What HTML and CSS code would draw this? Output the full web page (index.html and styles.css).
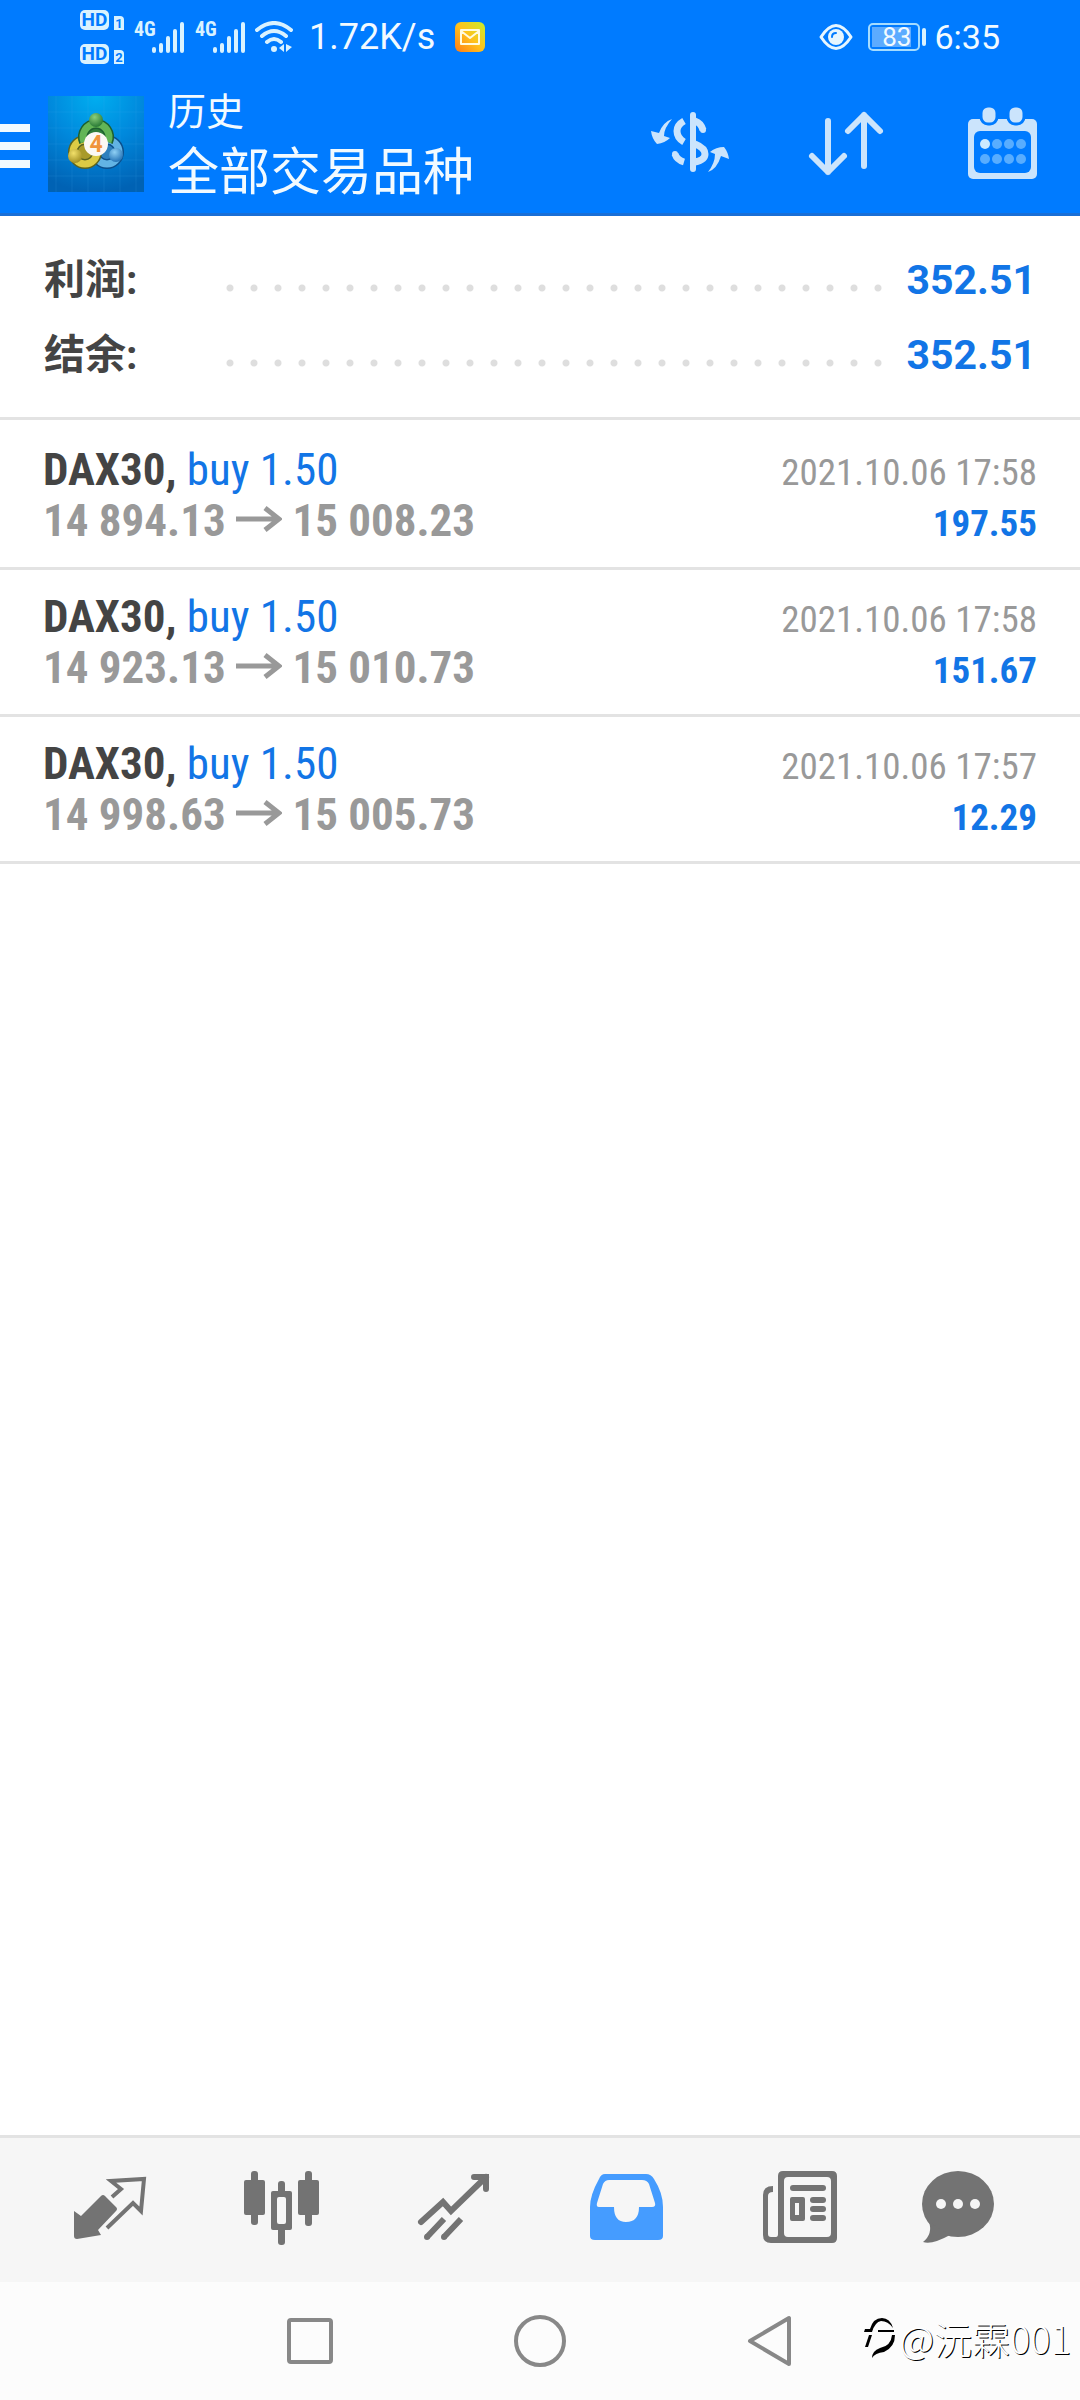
FILE: index.html
```html
<!DOCTYPE html>
<html lang="zh-CN">
<head>
<meta charset="utf-8">
<meta name="viewport" content="width=device-width, initial-scale=1">
<title>历史</title>
<link rel="stylesheet" href="styles.css">
</head>
<body>
<header class="top">
  <div class="status">
    <div class="hd">
      <div class="hd-row"><span class="hd-badge">HD</span><span class="hd-sim">1</span></div>
      <div class="hd-row"><span class="hd-badge">HD</span><span class="hd-sim">2</span></div>
    </div>
    <div class="signal">
      <span class="net">4G</span>
      <svg width="33" height="32" viewBox="0 0 33 32" aria-hidden="true"><path d="M2 28v2M9 24v6M16 17v13M23 10v20M30 3v27"/></svg>
    </div>
    <div class="signal">
      <span class="net">4G</span>
      <svg width="33" height="32" viewBox="0 0 33 32" aria-hidden="true"><path d="M2 28v2M9 24v6M16 17v13M23 10v20M30 3v27"/></svg>
    </div>
    <svg class="wifi" width="38" height="32" viewBox="0 0 38 32" aria-hidden="true">
      <path class="wifi-arc" d="M2 9Q19-5 36 9M7 15Q19 5 31 15M12 21Q19 15 26 21"/>
      <circle cx="19" cy="28" r="3"/><path d="M29 23v8l-5-4zM31 23v8l6-5z"/>
    </svg>
    <span class="speed">1.72K/s</span>
    <svg width="30" height="30" viewBox="0 0 30 30" aria-hidden="true">
      <defs><linearGradient id="mail" x1="0" y1="1" x2="1" y2="0"><stop offset="0" stop-color="#ff7a14"/><stop offset=".5" stop-color="#ffc21c"/><stop offset="1" stop-color="#c9ee2e"/></linearGradient></defs>
      <rect width="30" height="30" rx="6" fill="url(#mail)"/>
      <path d="M6 8h18v14H6zM6 9l9 7 9-7" fill="none" stroke="#fffbe0" stroke-width="2" stroke-linejoin="round"/>
    </svg>
    <div class="status-right">
      <svg width="34" height="28" viewBox="0 0 34 28" aria-hidden="true">
        <path d="M2 14Q17-9 32 14Q17 37 2 14z" fill="none" stroke="#e6f6ff" stroke-width="3" stroke-linejoin="round"/>
        <circle cx="17" cy="14" r="8" fill="#e6f6ff"/><path d="M13 14q0-4 4-4" fill="none" stroke="#007bff" stroke-width="2" stroke-linecap="round"/>
      </svg>
      <span class="battery"><span class="battery-level">83</span></span>
      <time class="clock">6:35</time>
    </div>
  </div>
  <div class="toolbar">
    <button class="menu" type="button" aria-label="菜单"><i></i><i></i><i></i></button>
    <svg class="logo" width="96" height="96" viewBox="0 0 96 96" aria-hidden="true">
      <defs>
        <radialGradient id="bg" cx=".5" cy="0" r="1"><stop offset="0" stop-color="#00aef0"/><stop offset=".5" stop-color="#0088dc"/><stop offset="1" stop-color="#0062b4"/></radialGradient>
        <radialGradient id="green" cx=".4" cy=".3" r=".8"><stop offset="0" stop-color="#8ccf7a"/><stop offset="1" stop-color="#1b6e2c"/></radialGradient>
        <radialGradient id="gold" cx=".4" cy=".3" r=".8"><stop offset="0" stop-color="#f2e06a"/><stop offset="1" stop-color="#97851a"/></radialGradient>
        <radialGradient id="blue" cx=".4" cy=".3" r=".8"><stop offset="0" stop-color="#8fd0f4"/><stop offset="1" stop-color="#1767ae"/></radialGradient>
      </defs>
      <rect width="96" height="96" fill="url(#bg)"/>
      <path d="M8 0v96M24 0v96M40 0v96M56 0v96M72 0v96M88 0v96M0 16h96M0 32h96M0 48h96M0 64h96M0 80h96" stroke="#4db8ef" stroke-opacity=".15"/>
      <circle cx="59" cy="56" r="12" fill="#2d7fbd" stroke="#0b4f8c" stroke-width="10"/>
      <circle cx="59" cy="56" r="12" fill="none" stroke="#62b3e4" stroke-width="7"/>
      <circle cx="37" cy="56" r="12" fill="#a89a2a" stroke="#5c6420" stroke-width="10"/>
      <circle cx="37" cy="56" r="12" fill="none" stroke="#dccb45" stroke-width="7"/>
      <path d="M36 46A13 13 0 1 1 60 46" fill="#2f7d3a" stroke="#1d6030" stroke-width="10"/>
      <path d="M36 46A13 13 0 1 1 60 46" fill="none" stroke="#62b556" stroke-width="7"/>
      <circle cx="48" cy="24" r="7" fill="url(#green)"/>
      <circle cx="27" cy="60" r="7" fill="url(#gold)"/>
      <circle cx="68" cy="59" r="7" fill="url(#blue)"/>
      <circle cx="48" cy="48" r="12" fill="#fbf8f4"/>
      <text x="48" y="56" text-anchor="middle" class="logo-num">4</text>
    </svg>
    <div class="titles">
      <h1 class="title">历史</h1>
      <p class="subtitle">全部交易品种</p>
    </div>
    <div class="actions">
      <button type="button" aria-label="货币">
        <svg width="78" height="72" viewBox="651 108 78 72">
          <g fill="none" stroke="#cbe4fc" stroke-width="7">
            <path stroke-width="6" stroke-linecap="round" d="M693 115v54"/>
            <path d="M684 121Q677 125 677 131Q677 138 684 142M695 144Q705 148 705 154Q705 160 695 162"/>
            <path d="M695 121Q701 123 703 130" /><path d="M675 154Q677 160 684 162"/>
          </g>
          <g fill="#cbe4fc"><circle cx="703" cy="130" r="3"/><circle cx="675" cy="154" r="3"/>
          <path d="M651 131l8 2Q663 122 672 119Q664 128 664 136L670 138Q665 143 657 144Q652 139 651 131z"/>
          <path d="M729 159l-8-3Q717 169 708 172Q715 163 715 154L710 152Q716 147 724 147Q728 152 729 159z"/></g>
        </svg>
      </button>
      <button type="button" aria-label="排序">
        <svg width="78" height="72" viewBox="807 108 78 72" fill="none" stroke="#cbe4fc" stroke-width="6" stroke-linecap="round" stroke-linejoin="round">
          <path d="M828 121v51M812 156l16 16 16-16M864 166v-51M848 131l16-16 16 16"/>
        </svg>
      </button>
      <button type="button" aria-label="日历">
        <svg width="78" height="74" viewBox="963 106 78 74">
          <rect x="968" y="118" width="69" height="60" rx="5" fill="#cbe4fc"/>
          <rect x="974" y="130" width="57" height="42" rx="6" fill="#007bff"/>
          <g fill="#cbe4fc" stroke="#007bff" stroke-width="3"><rect x="981" y="105" width="16" height="18" rx="7"/><rect x="1008" y="105" width="16" height="18" rx="7"/></g>
          <circle cx="985" cy="143" r="5" fill="#cbe9ff"/>
          <g fill="#58adff"><circle cx="997" cy="143" r="5"/><circle cx="1009" cy="143" r="5"/><circle cx="1021" cy="143" r="5"/><circle cx="985" cy="158" r="5"/><circle cx="997" cy="158" r="5"/><circle cx="1009" cy="158" r="5"/><circle cx="1021" cy="158" r="5"/></g>
        </svg>
      </button>
    </div>
  </div>
</header>

<main class="content">
  <dl class="summary">
    <div class="sum-row"><dt>利润:</dt><dd>352.51</dd></div>
    <div class="sum-row"><dt>结余:</dt><dd>352.51</dd></div>
  </dl>
  <ul class="deals">
    <li class="deal">
      <span class="symbol"><b>DAX30,</b> buy 1.50</span>
      <time class="when">2021.10.06 17:58</time>
      <span class="prices">14 894.13 <svg class="to" width="46" height="30" viewBox="0 0 46 30" role="img" aria-label="至"><path d="M0 13h43M29 2l14 11-14 11"/></svg> 15 008.23</span>
      <b class="profit">197.55</b>
    </li>
    <li class="deal">
      <span class="symbol"><b>DAX30,</b> buy 1.50</span>
      <time class="when">2021.10.06 17:58</time>
      <span class="prices">14 923.13 <svg class="to" width="46" height="30" viewBox="0 0 46 30" role="img" aria-label="至"><path d="M0 13h43M29 2l14 11-14 11"/></svg> 15 010.73</span>
      <b class="profit">151.67</b>
    </li>
    <li class="deal">
      <span class="symbol"><b>DAX30,</b> buy 1.50</span>
      <time class="when">2021.10.06 17:57</time>
      <span class="prices">14 998.63 <svg class="to" width="46" height="30" viewBox="0 0 46 30" role="img" aria-label="至"><path d="M0 13h43M29 2l14 11-14 11"/></svg> 15 005.73</span>
      <b class="profit">12.29</b>
    </li>
  </ul>
</main>

<nav class="tabs">
  <a href="#quotes" aria-label="行情">
    <svg width="80" height="80" viewBox="70 2170 80 80">
      <path d="M74 2211l7 5 20-20q2-2 4 0l11 11q2 2 0 4l-18 19 3 5-24 4q-3 0-3-3z"/>
      <path class="line" stroke-width="4" d="M112 2197l9-8-10-8 33-2-3 32-8-8-26 25"/>
    </svg>
  </a>
  <a href="#chart" aria-label="图表">
    <svg width="80" height="80" viewBox="242 2170 80 80">
      <rect x="244" y="2180" width="21" height="35" rx="2"/><rect x="298" y="2180" width="21" height="35" rx="2"/>
      <rect x="251" y="2171" width="7" height="54" rx="3"/><rect x="305" y="2171" width="7" height="55" rx="3"/>
      <rect x="278" y="2181" width="7" height="64" rx="3"/><rect x="271" y="2191" width="21" height="39" rx="2"/>
      <rect x="277" y="2197" width="9" height="27" rx="2" fill="#f6f6f6"/>
    </svg>
  </a>
  <a href="#trade" aria-label="交易">
    <svg width="80" height="80" viewBox="414 2170 80 80">
      <g class="line" stroke-width="6"><path stroke-linecap="round" d="M421 2222l22-20 8 9 35-34"/><path stroke-linecap="round" d="M474 2177h12v12"/>
      <path d="M444 2219l-17 18M461 2219l-17 18"/></g><circle cx="427" cy="2237" r="3"/><circle cx="444" cy="2237" r="3"/><path d="M480 2174h9v9z"/>
    </svg>
  </a>
  <a class="active" href="#history" aria-label="历史" aria-current="page">
    <svg width="80" height="80" viewBox="586 2170 80 80">
      <path fill-rule="evenodd" d="M605 2174h41q5 0 8 5q9 14 9 28v29q0 4-5 4h-63q-5 0-5-4v-29q0-12 9-28q2-5 6-5zM609 2180q-4 0-6 4l-6 19q-1 4 2 4h15q0 15 12 15q13 0 13-15h13q4 0 3-4l-6-19q-2-4-7-4z"/>
    </svg>
  </a>
  <a href="#news" aria-label="新闻">
    <svg width="80" height="80" viewBox="758 2170 80 80">
      <path fill-rule="evenodd" d="M783 2171h49q5 0 5 5v62q0 5-5 5h-61q-8 0-8-8v-40q0-9 10-9v6q-5 0-5 4v38q0 3 3 3h5q2 0 2-3v-58q0-5 5-5zM788 2177q-4 0-4 4v52q0 4 4 4h39q4 0 4-4v-52q0-4-4-4z"/>
      <rect x="790" y="2185" width="36" height="6" rx="3"/><path fill-rule="evenodd" d="M792 2197h11q2 0 2 2v20q0 2-2 2h-11q-2 0-2-2v-20q0-2 2-2zM795 2203v12h4v-12z"/>
      <rect x="810" y="2197" width="16" height="6" rx="3"/><rect x="810" y="2206" width="16" height="6" rx="3"/><rect x="810" y="2215" width="16" height="6" rx="3"/>
    </svg>
  </a>
  <a href="#messages" aria-label="消息">
    <svg width="104" height="80" viewBox="918 2170 104 80">
      <ellipse cx="958" cy="2204" rx="36" ry="33"/><path d="M929 2222Q933 2234 923 2242Q932 2245 950 2235z"/>
      <g fill="#f6f6f6"><circle cx="941" cy="2204" r="5"/><circle cx="958" cy="2204" r="5"/><circle cx="975" cy="2204" r="5"/></g>
    </svg>
  </a>
</nav>

<footer class="system">
  <button type="button" aria-label="最近"><svg width="54" height="54" viewBox="0 0 54 54"><rect x="6" y="6" width="42" height="42" rx="2"/></svg></button>
  <button type="button" aria-label="主页"><svg width="54" height="54" viewBox="0 0 54 54"><circle cx="27" cy="27" r="24"/></svg></button>
  <button type="button" aria-label="返回"><svg width="54" height="54" viewBox="0 0 54 54"><path d="M46 4v46L7 27z"/></svg></button>
  <div class="mark">
    <svg width="34" height="42" viewBox="0 0 34 42" aria-hidden="true"><path d="M1 15l1-3h5Q10 1 19 1Q27 1 30 11Q25 4 18 4Q12 5 9 15H2zM15 13h16v2H15zM6 18h3L5 30H2zM29 18h3Q32 30 21 35Q12 36 9 41Q9 34 17 31Q28 29 29 18z"/></svg>
    <span>@沅霖001</span>
  </div>
</footer>
</body>
</html>
```
FILE: styles.css
```css
* { box-sizing: border-box; margin: 0; padding: 0; }

body {
  min-height: 100vh;
  display: flex;
  flex-direction: column;
  background: #fff;
  color: #444;
  font-family: Roboto, "Noto Sans CJK SC", sans-serif;
}

button { border: 0; background: none; cursor: pointer; }
svg { display: block; }

/* Header */
.top { background: #007bff; color: #f2faff; border-bottom: 3px solid #1a6fd6; }

.status { display: flex; align-items: center; height: 74px; padding: 0 80px; }
.hd { display: flex; flex-direction: column; gap: 14px; }
.hd-row { display: flex; align-items: flex-end; gap: 5px; }
.hd-badge, .hd-sim { background: #d9f2ff; color: #007bff; font-weight: 700; text-align: center; }
.hd-badge { width: 29px; height: 20px; border-radius: 5px; font-size: 19px; line-height: 20px; }
.hd-sim { width: 10px; height: 14px; border-radius: 0 4px 0 0; font-size: 13px; line-height: 15px; }
.signal { display: flex; align-items: flex-start; margin-left: 10px; }
.signal svg { fill: none; stroke: #d9f2ff; stroke-width: 4; stroke-linecap: round; }
.net { width: 18px; font: 700 20px/16px "Roboto Condensed", Roboto, sans-serif; color: #d9f2ff; }
.wifi { margin-left: 9px; fill: #d9f2ff; }
.wifi-arc { fill: none; stroke: #d9f2ff; stroke-width: 4; stroke-linecap: round; }
.speed { margin: 0 20px 0 16px; font-size: 36px; line-height: 40px; }
.status-right { display: flex; align-items: center; margin-left: auto; }
.battery {
  position: relative;
  width: 52px; height: 28px;
  margin: 0 14px 0 15px;
  padding: 2px 7px 2px 2px;
  border: 2px solid #a5dcff; border-radius: 5px;
}
.battery::after {
  content: "";
  position: absolute; right: -8px; top: 3px;
  width: 4px; height: 18px; border-radius: 2px;
  background: #d9f2ff;
}
.battery-level { display: block; background: #5cabff; font-size: 26px; line-height: 20px; text-align: right; }
.clock { font-size: 34px; line-height: 40px; }

.toolbar { display: flex; align-items: center; height: 139px; padding-right: 39px; }
.menu { display: flex; flex-direction: column; gap: 10px; width: 30px; margin-right: 18px; padding-top: 4px; }
.menu i { height: 8px; background: #f2faff; }
.logo-num { font: 700 23px Roboto, sans-serif; fill: #f0943c; }
.titles { margin-left: 24px; padding-top: 3px; }
.title { font-size: 38px; font-weight: 400; line-height: 56px; }
.subtitle { font-size: 51px; line-height: 66px; }
.actions { display: flex; gap: 78px; margin-left: auto; }

/* Totals */
.summary { padding: 26px 44px 25px; border-bottom: 3px solid #e3e3e3; font-size: 41px; font-weight: 700; }
.sum-row { display: flex; align-items: center; height: 75px; }
.sum-row dt { width: 174px; line-height: 60px; }
.sum-row dd { flex: 1; display: flex; color: #1275e6; line-height: 50px; }
.sum-row dd::before {
  content: "";
  flex: 1;
  margin-right: 14px;
  background: radial-gradient(circle at 12px 33px, #dedede 3px, transparent 4px) 0 0 / 24px 100% repeat-x;
}

/* Deals */
.deals { list-style: none; padding-top: 3px; font-family: "Roboto Condensed", Roboto, sans-serif; }
.deal {
  display: grid;
  grid-template-columns: 1fr auto;
  align-items: baseline;
  padding: 21px 43px;
  border-bottom: 3px solid #e3e3e3;
}
.symbol, .prices { font-size: 45px; line-height: 51px; }
.symbol { color: #1275e6; }
.symbol b { color: #444; }
.prices { font-weight: 700; color: #999; }
.when, .profit { font-size: 37px; line-height: 43px; text-align: right; }
.when { color: #999; }
.profit { color: #1275e6; }
.to { display: inline-block; fill: none; stroke: #999; stroke-width: 5; }

.content { flex: 1; }

/* Bottom bars */
.tabs {
  display: grid;
  grid-template-columns: repeat(6, 1fr);
  padding: 32px 24px;
  background: #f6f6f6;
  border-top: 3px solid #e3e3e3;
}
.tabs a { display: flex; justify-content: center; }
.tabs svg { fill: #737373; }
.tabs .line { fill: none; stroke: #737373; }
.tabs .active svg { fill: #459cff; }

.system {
  position: relative;
  display: grid;
  grid-template-columns: repeat(3, 1fr);
  padding: 32px 18%;
  background: #fcfcfc;
}
.system button { display: flex; justify-content: center; }
.system button svg { fill: none; stroke: #888; stroke-width: 4; stroke-linejoin: round; }
.mark {
  position: absolute; right: 9px; bottom: 34px;
  display: flex; align-items: center; gap: 2px;
  color: #fff;
  font: 300 38px/56px "Noto Sans CJK SC", sans-serif;
  text-shadow: 1px 1px 0 #000;
}
.mark svg { fill: #000; }
```
